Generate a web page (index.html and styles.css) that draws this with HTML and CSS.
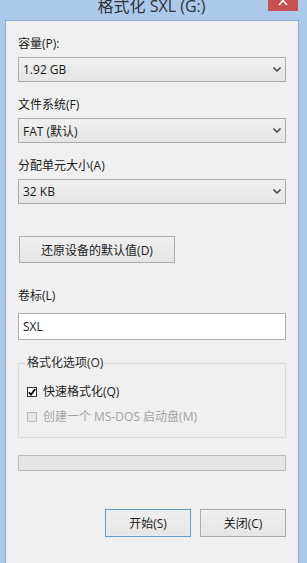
FILE: index.html
```html
<!DOCTYPE html>
<html lang="zh-CN">
<head>
    <meta charset="UTF-8">
    <meta name="viewport" content="width=device-width, initial-scale=1.0">
    <title>格式化 SXL (G:)</title>
    <link rel="stylesheet" href="styles.css">
</head>
<body>
    <div class="window">
        <!-- Title Bar -->
        <div class="titlebar">
            <span class="title">格式化 SXL (G:)</span>
            <span class="close">
                <svg width="30" height="11" viewBox="0 0 30 11">
                    <path d="M11 -4 L19 5 M19 -4 L11 5" stroke="#ffffff" stroke-width="1.6" fill="none"/>
                </svg>
            </span>
        </div>

        <!-- Dialog Body -->
        <div class="panel">
            <div class="field">
                <div class="label">容量(P):</div>
                <div class="select">
                    <span>1.92 GB</span>
                    <svg class="chevron" width="8" height="5" viewBox="0 0 8 5"><path d="M0.5 0.5 L4 4 L7.5 0.5" stroke="#505050" stroke-width="1.6" fill="none"/></svg>
                </div>
            </div>

            <div class="field">
                <div class="label">文件系统(F)</div>
                <div class="select">
                    <span>FAT (默认)</span>
                    <svg class="chevron" width="8" height="5" viewBox="0 0 8 5"><path d="M0.5 0.5 L4 4 L7.5 0.5" stroke="#505050" stroke-width="1.6" fill="none"/></svg>
                </div>
            </div>

            <div class="field">
                <div class="label">分配单元大小(A)</div>
                <div class="select">
                    <span>32 KB</span>
                    <svg class="chevron" width="8" height="5" viewBox="0 0 8 5"><path d="M0.5 0.5 L4 4 L7.5 0.5" stroke="#505050" stroke-width="1.6" fill="none"/></svg>
                </div>
            </div>

            <button class="btn restore">还原设备的默认值(D)</button>

            <div class="field volume">
                <div class="label">卷标(L)</div>
                <div class="input">SXL</div>
            </div>

            <!-- Format Options -->
            <fieldset class="options">
                <legend>格式化选项(O)</legend>
                <div class="check">
                    <span class="box checked">
                        <svg width="8" height="8" viewBox="0 0 8 8"><path d="M0.8 4.2 L3 6.6 L7.3 1" stroke="#000000" stroke-width="1.7" fill="none"/></svg>
                    </span>
                    快速格式化(Q)
                </div>
                <div class="check disabled">
                    <span class="box"></span>
                    创建一个 MS-DOS 启动盘(M)
                </div>
            </fieldset>

            <div class="progress"></div>

            <div class="actions">
                <button class="btn default">开始(S)</button>
                <button class="btn">关闭(C)</button>
            </div>
        </div>
    </div>
</body>
</html>
```

FILE: styles.css
```css
/* General Styling */
* {
    box-sizing: border-box;
    margin: 0;
    padding: 0;
}

body {
    height: 100vh;
    overflow: hidden;
    background: #adc9e9;
    font-family: 'Open Sans', 'Noto Sans CJK SC', sans-serif;
    font-size: 12px;
    color: #1b1b1b;
}

.window {
    display: flex;
    flex-direction: column;
    height: 100%;
}

/* Title Bar */
.titlebar {
    display: flex;
    align-items: flex-start;
    height: 20px;
    padding: 0 9px 0 35px;
    overflow: hidden;
}

.title {
    flex: 1;
    text-align: center;
    font-size: 16px;
    line-height: 16px;
    margin-top: -2px;
    color: #2e3338;
}

.close {
    display: block;
    width: 30px;
    height: 11px;
    background: #c75050;
}

.close svg {
    display: block;
}

/* Dialog Body */
.panel {
    flex: 1;
    margin: 0 8px 0 5px;
    padding: 15px 12px 0 12px;
    background: #f0f0f0;
    border: 1px solid #8eacd1;
    border-bottom: none;
}

.label {
    line-height: 16px;
    margin-bottom: 5px;
}

.field {
    margin-bottom: 15px;
}

.select {
    display: flex;
    align-items: center;
    justify-content: space-between;
    height: 25px;
    padding: 0 4px 0 4px;
    border: 1px solid #acacac;
    background: linear-gradient(to bottom, #f0f0f0, #e5e5e5);
}

.chevron {
    display: block;
}

/* Buttons */
.btn {
    display: block;
    height: 28px;
    font-family: inherit;
    font-size: 12px;
    color: #1b1b1b;
    border: 1px solid #acacac;
    background: linear-gradient(to bottom, #f0f0f0, #e5e5e5);
}

.btn.restore {
    width: 156px;
    height: 27px;
    margin: 32px 0 0 1px;
}

.btn.default {
    border-color: #6a9cc8;
    box-shadow: inset 0 0 0 1px #e3eef8;
}

/* Volume Label */
.field.volume {
    margin-top: 25px;
    margin-bottom: 15px;
}

.field.volume .label {
    margin-bottom: 9px;
}

.input {
    height: 27px;
    line-height: 25px;
    padding: 0 4px;
    background: #ffffff;
    border: 1px solid #abadb3;
}

/* Format Options */
.options {
    border: 1px solid #dadada;
    padding: 11px 7px 10px 7px;
}

.options legend {
    padding: 0 1px;
    line-height: 16px;
    color: #2b2b2b;
}

.check {
    display: flex;
    align-items: center;
    gap: 6px;
    line-height: 20px;
    height: 20px;
    padding-left: 1px;
}

.check + .check {
    margin-top: 5px;
}

.box {
    display: flex;
    align-items: center;
    justify-content: center;
    width: 10px;
    height: 10px;
    border: 1px solid #bcbcbc;
    background: #e6e6e6;
}

.box.checked {
    border-color: #333333;
    background: #ffffff;
}

.check.disabled {
    color: #a3a3a3;
}

/* Progress */
.progress {
    height: 16px;
    margin-top: 17px;
    border: 1px solid #bcbcbc;
    background: #e6e6e6;
}

.actions {
    display: flex;
    justify-content: flex-end;
    gap: 9px;
    margin-top: 38px;
}

.actions .btn {
    width: 86px;
}
```
